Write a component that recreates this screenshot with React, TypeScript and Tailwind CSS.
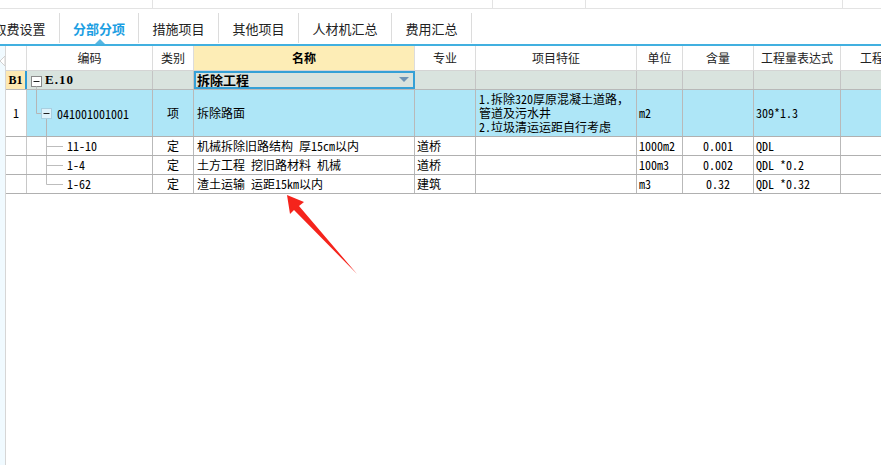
import React from "react";

const data = "font-['Noto_Sans_Mono_CJK_SC','Liberation_Mono','Noto_Sans_CJK_SC',monospace]";
const sans = "font-['Noto_Sans_CJK_SC','Noto_Sans',sans-serif]";

function ChildCode({ code, last }: { code: string; last?: boolean }) {
  return (
    <div className="w-[126px] shrink-0 border-r border-[#b9b9b9] flex items-center">
      <svg width="38" height="18" className="shrink-0">
        <line x1="19.5" y1="0" x2="19.5" y2={last ? 9.5 : 18} stroke="#bdbdbd" />
        <line x1="19.5" y1="9.5" x2="36" y2="9.5" stroke="#bdbdbd" />
      </svg>
      <span className="ml-[2px]">{code}</span>
    </div>
  );
}

function ChildRow({ code, name, pro, unit, qty, expr, last }: { code: string; name: string; pro: string; unit: string; qty: string; expr: string; last?: boolean }) {
  return (
    <div className="flex h-[19px] border-b border-[#b0b0b0] bg-white text-[12px] leading-[14px] text-black">
      <div className="w-[21px] shrink-0 border-r border-[#c8c8c8]" />
      <ChildCode code={code} last={last} />
      <div className="w-[41px] shrink-0 border-r border-[#b9b9b9] flex items-center justify-center">定</div>
      <div className="w-[221px] shrink-0 border-r border-[#b9b9b9] flex items-center pl-[3px] whitespace-pre">{name}</div>
      <div className="w-[61px] shrink-0 border-r border-[#b9b9b9] flex items-center pl-[2px]">{pro}</div>
      <div className="w-[161px] shrink-0 border-r border-[#b9b9b9]" />
      <div className="w-[46px] shrink-0 border-r border-[#b9b9b9] flex items-center pl-[2px]">{unit}</div>
      <div className="w-[71px] shrink-0 border-r border-[#b9b9b9] flex items-center justify-center">{qty}</div>
      <div className="w-[87px] shrink-0 border-r border-[#b9b9b9] flex items-center pl-[2px] whitespace-pre">{expr}</div>
      <div className="flex-1" />
    </div>
  );
}

export default function App() {
  const tabs = [
    { t: "取费设置", w: "w-[80px] -ml-[20px]" },
    { t: "分部分项", w: "w-[79px]", active: true },
    { t: "措施项目", w: "w-[80px]" },
    { t: "其他项目", w: "w-[80px]" },
    { t: "人材机汇总", w: "w-[93px]" },
    { t: "费用汇总", w: "w-[80px]" },
  ];
  return (
    <div className="relative w-[881px] h-[465px] overflow-hidden bg-white">
      {/* top strip */}
      <div className="flex h-[9px] border-b border-[#e3e3e3]">
        <div className="w-[153px] border-r border-[#e3e3e3]" />
        <div className="w-[340px] border-r border-[#e3e3e3]" />
        <div className="w-[93px] border-r border-[#e3e3e3]" />
        <div className="w-[257px] border-r border-[#e3e3e3]" />
        <div className="flex-1" />
      </div>
      <div className="h-[4px]" />
      {/* tabs */}
      <div className={`flex h-[31px] ${sans} text-[13px]`}>
        {tabs.map((tab) => (
          <div key={tab.t} className={`${tab.w} shrink-0 relative flex items-center justify-center pt-[1px] border-r border-[#dcdcdc] h-[30px]`}>
            <span className={tab.active ? "text-[#1b9ee2] font-bold" : "text-[#222]"}>{tab.t}</span>
            {tab.active && (
              <svg width="10" height="5" className="absolute bottom-[-1px] left-[35px]">
                <polygon points="0,5 5,0 10,5" fill="#55b6e2" />
              </svg>
            )}
          </div>
        ))}
        <div className="flex-1" />
      </div>
      <div className="h-[2px] bg-[#41b0e0]" />

      {/* body */}
      <div className="flex">
        <div className="w-[6px] shrink-0 h-[419px] bg-[#f0faff] border-r border-[#d6d6d6] pt-[10px]">
          <svg width="5" height="10">
            <polygon points="5,0 0,5 5,10" fill="#ffffff" stroke="#d0d0d0" />
          </svg>
        </div>
        <div className="flex-1 flex flex-col">
          {/* header */}
          <div className={`flex h-[25px] border-b border-[#d4d4d4] ${sans} text-[12px] text-[#222]`}>
            <div className="w-[21px] shrink-0 border-r border-[#dcdcdc]" />
            <div className="w-[126px] shrink-0 border-r border-[#dcdcdc] flex items-center justify-center">编码</div>
            <div className="w-[41px] shrink-0 border-r border-[#dcdcdc] flex items-center justify-center">类别</div>
            <div className="w-[221px] shrink-0 border-r border-[#dcdcdc] bg-[#fdedb6] flex items-center justify-center font-bold text-black">名称</div>
            <div className="w-[61px] shrink-0 border-r border-[#dcdcdc] flex items-center justify-center">专业</div>
            <div className="w-[161px] shrink-0 border-r border-[#dcdcdc] flex items-center justify-center">项目特征</div>
            <div className="w-[46px] shrink-0 border-r border-[#dcdcdc] flex items-center justify-center">单位</div>
            <div className="w-[71px] shrink-0 border-r border-[#dcdcdc] flex items-center justify-center">含量</div>
            <div className="w-[87px] shrink-0 border-r border-[#dcdcdc] flex items-center justify-center">工程量表达式</div>
            <div className="flex-1 flex items-center pl-[19px] whitespace-nowrap overflow-hidden">工程量</div>
          </div>

          {/* B1 row */}
          <div className={`flex h-[19px] border-b border-[#b8b8b8] bg-[#d9e3de] text-[12px] text-black ${data}`}>
            <div className="w-[21px] shrink-0 bg-[#fde9b2] border-r-2 border-[#2e9bd6] flex items-center justify-center font-bold font-['Liberation_Serif',serif] text-[12px]">B1</div>
            <div className="w-[126px] shrink-0 border-r border-[#c4c4c4] flex items-center">
              <svg width="17" height="18" className="shrink-0">
                <rect x="4.5" y="5.5" width="10" height="10" fill="#ffffff" stroke="#8a8a8a" />
                <line x1="6.5" y1="10.5" x2="12.5" y2="10.5" stroke="#222" />
                <line x1="9.5" y1="15.5" x2="9.5" y2="18" stroke="#bdbdbd" />
              </svg>
              <span className="ml-[1px] font-bold font-['Liberation_Serif',serif] text-[13px] tracking-[1px]">E.10</span>
            </div>
            <div className="w-[41px] shrink-0 border-r border-[#c4c4c4]" />
            <div className="w-[221px] shrink-0 border-2 border-[#35a0d6] flex items-center pl-[1px] pr-[4px] justify-between">
              <span className="font-bold text-[13px]">拆除工程</span>
              <svg width="10" height="6">
                <polygon points="0,0 10,0 5,5" fill="#6d93b5" />
              </svg>
            </div>
            <div className="w-[61px] shrink-0 border-r border-[#c4c4c4]" />
            <div className="w-[161px] shrink-0 border-r border-[#c4c4c4]" />
            <div className="w-[46px] shrink-0 border-r border-[#c4c4c4]" />
            <div className="w-[71px] shrink-0 border-r border-[#c4c4c4]" />
            <div className="w-[87px] shrink-0 border-r border-[#c4c4c4]" />
            <div className="flex-1" />
          </div>

          {/* row 1 */}
          <div className={`flex h-[47px] border-b border-[#b0b0b0] text-[12px] leading-[14px] text-black ${data}`}>
            <div className="w-[21px] shrink-0 bg-white border-r border-[#c8c8c8] flex items-center justify-center">1</div>
            <div className="w-[126px] shrink-0 bg-[#aee6f7] border-r border-[#b9b9b9] flex items-start">
              <svg width="30" height="46" className="shrink-0">
                <line x1="9.5" y1="0" x2="9.5" y2="23.5" stroke="#b5b5b5" />
                <line x1="9.5" y1="23.5" x2="14" y2="23.5" stroke="#b5b5b5" />
                <rect x="14.5" y="18.5" width="10" height="10" fill="#def2fa" stroke="#a9cfe0" />
                <line x1="16.5" y1="23.5" x2="22.5" y2="23.5" stroke="#222" />
                <line x1="19.5" y1="29" x2="19.5" y2="46" stroke="#b5b5b5" />
              </svg>
              <span className="mt-[17px]">041001001001</span>
            </div>
            <div className="w-[41px] shrink-0 bg-[#aee6f7] border-r border-[#b9b9b9] flex items-center justify-center">项</div>
            <div className="w-[221px] shrink-0 bg-[#aee6f7] border-r border-[#b9b9b9] flex items-center pl-[3px]">拆除路面</div>
            <div className="w-[61px] shrink-0 bg-[#aee6f7] border-r border-[#b9b9b9]" />
            <div className="w-[161px] shrink-0 bg-[#aee6f7] border-r border-[#b9b9b9] flex flex-col justify-center pl-[3px]">
              <span>1.拆除320厚原混凝土道路，</span>
              <span>管道及污水井</span>
              <span>2.垃圾清运运距自行考虑</span>
            </div>
            <div className="w-[46px] shrink-0 bg-[#aee6f7] border-r border-[#b9b9b9] flex items-center pl-[2px]">m2</div>
            <div className="w-[71px] shrink-0 bg-[#aee6f7] border-r border-[#b9b9b9]" />
            <div className="w-[87px] shrink-0 bg-[#aee6f7] border-r border-[#b9b9b9] flex items-center pl-[2px]">309*1.3</div>
            <div className="flex-1 bg-[#aee6f7]" />
          </div>

          <div className={data}>
            <ChildRow code="11-10" name="机械拆除旧路结构 厚15cm以内" pro="道桥" unit="1000m2" qty="0.001" expr="QDL" />
            <ChildRow code="1-4" name="土方工程 挖旧路材料 机械" pro="道桥" unit="100m3" qty="0.002" expr="QDL *0.2" />
            <ChildRow code="1-62" name="渣土运输 运距15km以内" pro="建筑" unit="m3" qty="0.32" expr="QDL *0.32" last />
          </div>
        </div>
      </div>

      {/* red arrow annotation */}
      <svg className="absolute left-0 top-0 pointer-events-none" width="881" height="465">
        <polygon points="287,195 304,202 299,206 357,274 294,210 290,214" fill="#f5241c" />
      </svg>
    </div>
  );
}
